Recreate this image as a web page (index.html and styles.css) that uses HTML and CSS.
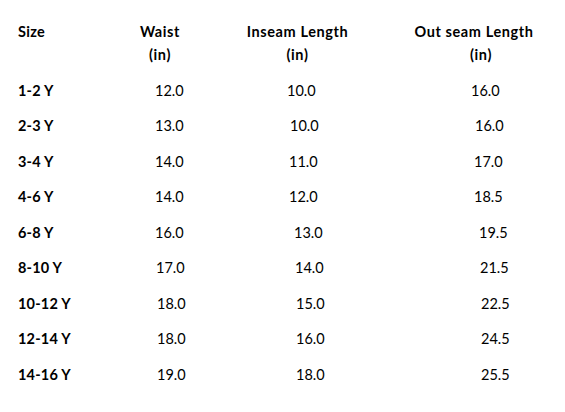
FILE: index.html
```html
<!DOCTYPE html>
<html lang="en">
<head>
<meta charset="utf-8">
<title>Size chart</title>
<link rel="stylesheet" href="styles.css">
</head>
<body>
<div class="chart">
  <div class="head">
    <div class="hcell size">Size</div>
    <div class="hcell waist"><span>Waist</span><span>(in)</span></div>
    <div class="hcell inseam"><span>Inseam Length</span><span>(in)</span></div>
    <div class="hcell outseam"><span>Out seam Length</span><span class="unit-shift">(in)</span></div>
  </div>
  <div class="row r1"><div class="size">1-2 Y</div><div class="w">12.0</div><div class="i">10.0</div><div class="o">16.0</div></div>
  <div class="row r2"><div class="size">2-3 Y</div><div class="w">13.0</div><div class="i">10.0</div><div class="o">16.0</div></div>
  <div class="row r3"><div class="size">3-4 Y</div><div class="w">14.0</div><div class="i">11.0</div><div class="o">17.0</div></div>
  <div class="row r4"><div class="size">4-6 Y</div><div class="w">14.0</div><div class="i">12.0</div><div class="o">18.5</div></div>
  <div class="row r5"><div class="size">6-8 Y</div><div class="w">16.0</div><div class="i">13.0</div><div class="o">19.5</div></div>
  <div class="row r6"><div class="size">8-10 Y</div><div class="w">17.0</div><div class="i">14.0</div><div class="o">21.5</div></div>
  <div class="row r7"><div class="size">10-12 Y</div><div class="w">18.0</div><div class="i">15.0</div><div class="o">22.5</div></div>
  <div class="row r8"><div class="size">12-14 Y</div><div class="w">18.0</div><div class="i">16.0</div><div class="o">24.5</div></div>
  <div class="row r9"><div class="size">14-16 Y</div><div class="w">19.0</div><div class="i">18.0</div><div class="o">25.5</div></div>
</div>
</body>
</html>
```
FILE: styles.css
```css
html, body {
  margin: 0;
  padding: 0;
  background: #ffffff;
}
body {
  font-family: Lato, "Liberation Sans", sans-serif;
  font-size: 14.5px;
  color: #000000;
}
.chart {
  padding-top: 20px;
  width: 565px;
}
.head, .row {
  display: grid;
  grid-template-columns: 130px 60px 215px 138px;
}
.head {
  font-weight: bold;
  line-height: 23px;
  letter-spacing: 0.6px;
  margin-bottom: 6.6px;
}
.hcell {
  display: flex;
  flex-direction: column;
  align-items: center;
  white-space: nowrap;
}
.hcell.size {
  align-items: flex-start;
  padding-left: 18px;
  letter-spacing: 0.3px;
}
.unit-shift {
  padding-left: 14px;
}
.row {
  height: 35.5px;
  line-height: 35.5px;
  white-space: nowrap;
  --w: 0px;
  --i: 0px;
  --o: 0px;
}
.row .size {
  font-weight: bold;
  letter-spacing: 0.2px;
  padding-left: 18px;
}
.row .w { padding-left: calc(25px + var(--w)); }
.row .i { padding-left: calc(97px + var(--i)); }
.row .o { padding-left: calc(66px + var(--o)); }

.r2 { --i: 3px; --o: 4px; }
.r3 { --i: 2px; --o: 3px; }
.r4 { --i: 2px; --o: 3px; }
.r5 { --i: 7px; --o: 8px; }
.r6 { --w: 1px; --i: 8px; --o: 9px; }
.r7 { --w: 2px; --i: 9px; --o: 10px; }
.r8 { --w: 2px; --i: 9px; --o: 10px; }
.r9 { --w: 2px; --i: 9px; --o: 10px; }
```
